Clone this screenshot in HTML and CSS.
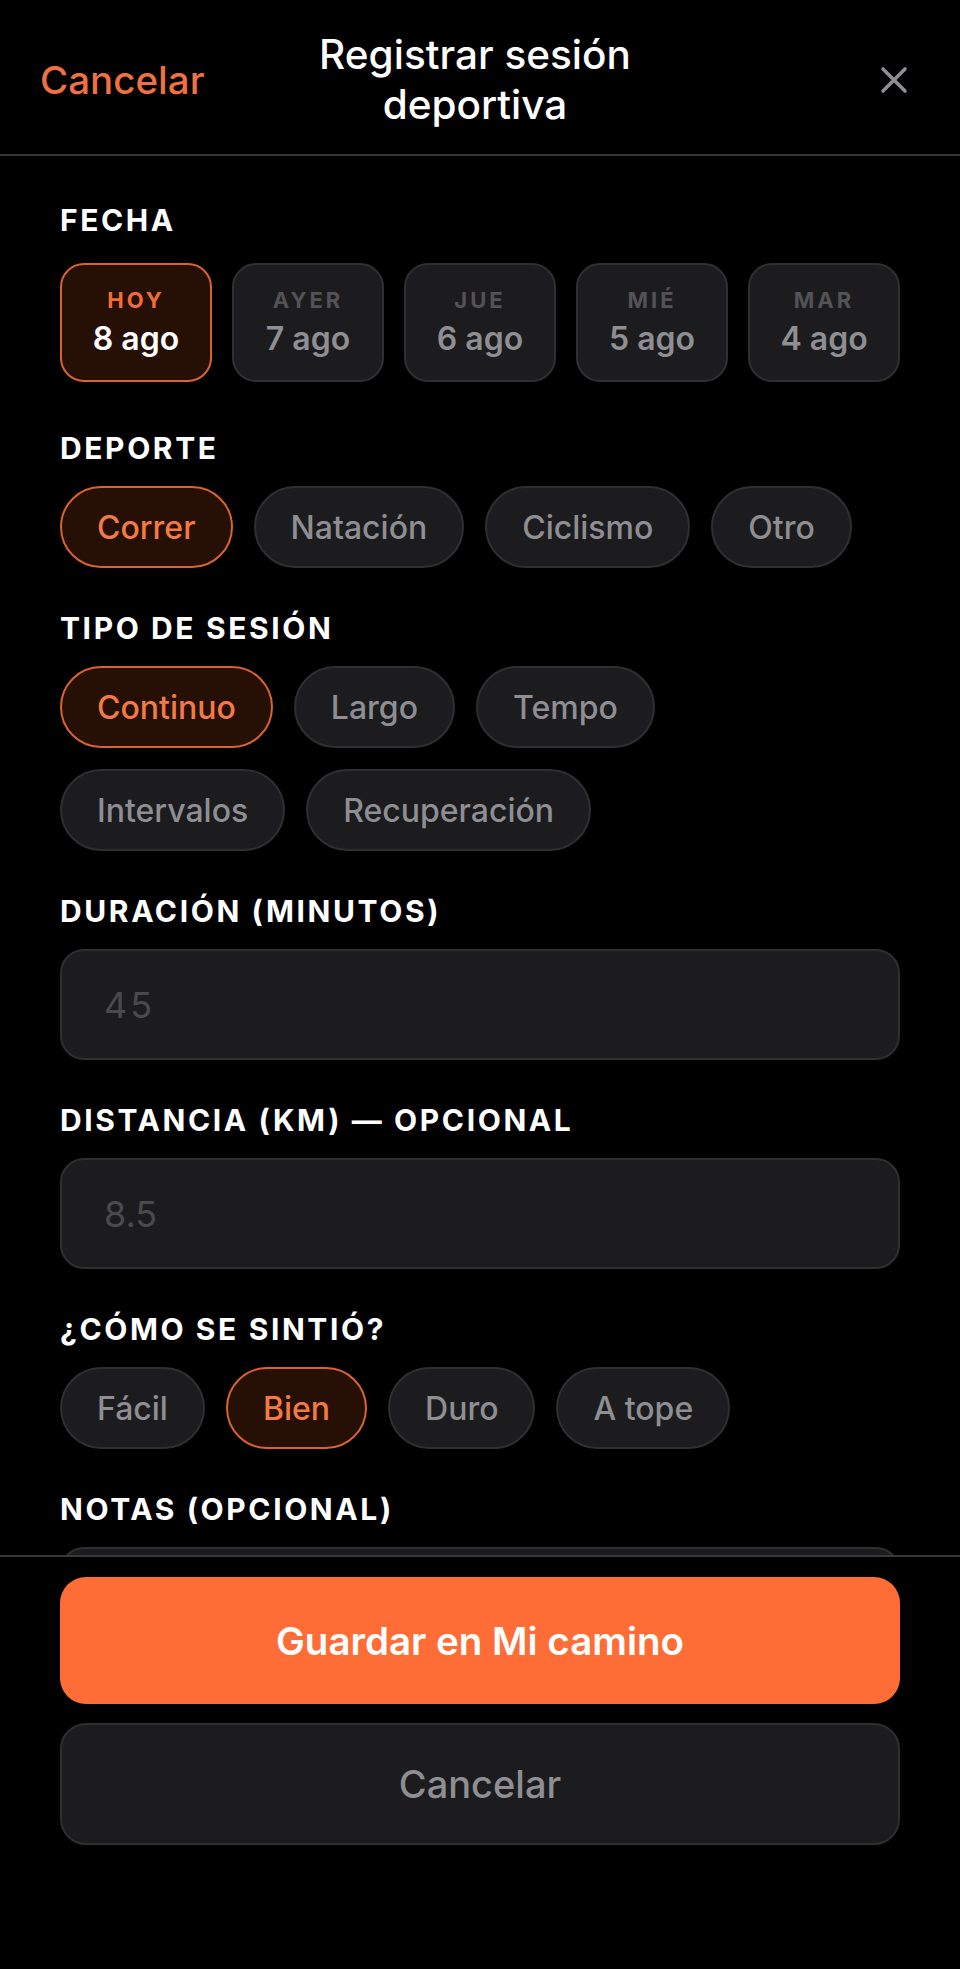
FILE: index.html
```html
<!DOCTYPE html>
<html lang="es">
<head>
    <meta charset="UTF-8">
    <meta name="viewport" content="width=device-width, initial-scale=1.0">
    <title>Registrar sesión deportiva</title>
    <link rel="stylesheet" href="styles.css">
</head>
<body>

<div class="screen">
    <!-- Header -->
    <header class="header">
        <span class="header-cancel">Cancelar</span>
        <h1 class="header-title">Registrar sesión<br>deportiva</h1>
        <span class="header-close">
            <svg width="32" height="32" viewBox="0 0 32 32">
                <path d="M5 5 L27 27 M27 5 L5 27" stroke="#8e8e93" stroke-width="3.6" stroke-linecap="round" fill="none"/>
            </svg>
        </span>
    </header>

    <main class="content">
        <section class="field">
            <h2 class="label">Fecha</h2>
            <div class="dates">
                <div class="date active"><span class="date-day">HOY</span><span class="date-num">8 ago</span></div>
                <div class="date"><span class="date-day">AYER</span><span class="date-num">7 ago</span></div>
                <div class="date"><span class="date-day">JUE</span><span class="date-num">6 ago</span></div>
                <div class="date"><span class="date-day">MIÉ</span><span class="date-num">5 ago</span></div>
                <div class="date"><span class="date-day">MAR</span><span class="date-num">4 ago</span></div>
            </div>
        </section>

        <section class="field">
            <h2 class="label">Deporte</h2>
            <div class="pills">
                <span class="pill active">Correr</span>
                <span class="pill">Natación</span>
                <span class="pill">Ciclismo</span>
                <span class="pill">Otro</span>
            </div>
        </section>

        <section class="field">
            <h2 class="label">Tipo de sesión</h2>
            <div class="pill-rows">
                <div class="pills">
                    <span class="pill active">Continuo</span>
                    <span class="pill">Largo</span>
                    <span class="pill">Tempo</span>
                </div>
                <div class="pills">
                    <span class="pill">Intervalos</span>
                    <span class="pill">Recuperación</span>
                </div>
            </div>
        </section>

        <section class="field">
            <h2 class="label">Duración (minutos)</h2>
            <input class="input input-wide" type="text" placeholder="45">
        </section>

        <section class="field">
            <h2 class="label">Distancia (km) — opcional</h2>
            <input class="input" type="text" placeholder="8.5">
        </section>

        <section class="field">
            <h2 class="label">¿Cómo se sintió?</h2>
            <div class="pills">
                <span class="pill">Fácil</span>
                <span class="pill active">Bien</span>
                <span class="pill">Duro</span>
                <span class="pill">A tope</span>
            </div>
        </section>

        <section class="field">
            <h2 class="label">Notas (opcional)</h2>
            <textarea class="input notes"></textarea>
        </section>
    </main>

    <footer class="footer">
        <button class="btn btn-primary">Guardar en Mi camino</button>
        <button class="btn btn-secondary">Cancelar</button>
    </footer>
</div>

</body>
</html>
```

FILE: styles.css
```css
* {
    margin: 0;
    padding: 0;
    box-sizing: border-box;
}

body {
    font-family: Inter, 'Noto Sans', sans-serif;
    background: #000;
    color: #fff;
}

.screen {
    display: flex;
    flex-direction: column;
    height: 1969px;
}

/* Header */
.header {
    display: grid;
    grid-template-columns: 1fr auto 1fr;
    align-items: center;
    padding: 30px 50px 24px 40px;
    border-bottom: 2px solid #38383a;
}

.header-cancel {
    color: #ef7040;
    font-size: 38.5px;
    font-weight: 500;
}

.header-title {
    font-size: 40.5px;
    font-weight: 500;
    line-height: 50px;
    text-align: center;
}

.header-close {
    justify-self: end;
    display: flex;
}

/* Form */
.content {
    flex: 1;
    min-height: 0;
    overflow: hidden;
    padding: 47px 60px 0;
    display: flex;
    flex-direction: column;
    gap: 43px;
}

.field {
    display: flex;
    flex-direction: column;
    flex-shrink: 0;
}

.label {
    font-size: 30px;
    font-weight: 700;
    line-height: 34px;
    letter-spacing: 2.6px;
    text-transform: uppercase;
    margin-bottom: 21px;
}

.dates {
    display: grid;
    grid-template-columns: repeat(5, 1fr);
    gap: 20px;
    margin-top: 5px;
    margin-bottom: 6px;
}

.date {
    height: 119px;
    border-radius: 24px;
    background: #1c1c1e;
    border: 2px solid #2f2f31;
    display: flex;
    flex-direction: column;
    align-items: center;
    justify-content: center;
    gap: 6px;
}

.date-day {
    font-size: 22px;
    font-weight: 700;
    letter-spacing: 3px;
    color: #535356;
}

.date-num {
    font-size: 32px;
    font-weight: 600;
    color: #8e8e93;
}

.date.active {
    background: #261006;
    border-color: #d8632f;
}

.date.active .date-day {
    color: #f26d35;
}

.date.active .date-num {
    color: #fff;
}

.pill-rows {
    display: flex;
    flex-direction: column;
    gap: 21px;
}

.pills {
    display: flex;
    flex-wrap: wrap;
    gap: 21px;
}

.pill {
    height: 82px;
    padding: 0 35px;
    display: flex;
    align-items: center;
    border-radius: 41px;
    background: #1c1c1e;
    border: 2px solid #2f2f31;
    color: #8e8e93;
    font-size: 32px;
    font-weight: 500;
}

.pill.active {
    background: #261006;
    border-color: #d8632f;
    color: #f27a45;
}

.input {
    display: block;
    width: 100%;
    height: 111px;
    padding: 0 42px;
    border-radius: 24px;
    background: #1c1c1e;
    border: 2px solid #2f2f31;
    color: #fff;
    font-family: inherit;
    font-size: 36px;
    outline: none;
}

.input::placeholder {
    color: #4a4a4d;
}

.input-wide::placeholder {
    letter-spacing: 3px;
}

.notes {
    height: 160px;
    flex-shrink: 0;
    resize: none;
}

/* Footer */
.footer {
    border-top: 2px solid #38383a;
    padding: 20px 60px 124px;
    display: flex;
    flex-direction: column;
    gap: 19px;
}

.btn {
    width: 100%;
    border-radius: 26px;
    font-family: inherit;
    cursor: pointer;
}

.btn-primary {
    height: 127px;
    background: #fd6d35;
    border: none;
    color: #fff;
    font-size: 38.5px;
    font-weight: 600;
}

.btn-secondary {
    height: 122px;
    background: #1c1c1e;
    border: 2px solid #2f2f31;
    color: #8e8e93;
    font-size: 38px;
    font-weight: 500;
}
```
